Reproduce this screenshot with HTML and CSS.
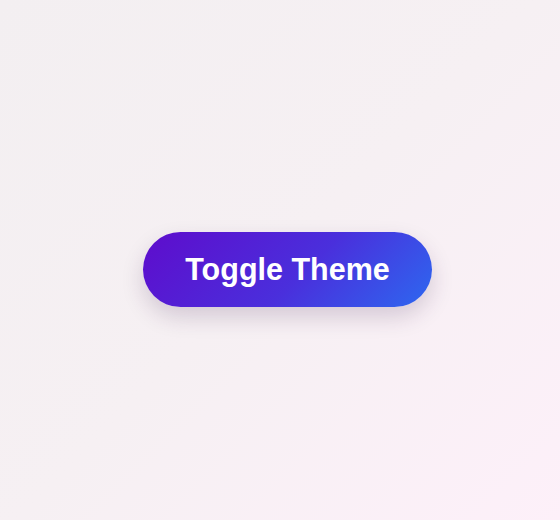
FILE: index.html
```html
<!DOCTYPE html>
<html lang="en">
<head>
<meta charset="utf-8">
<title>Toggle Theme</title>
<link rel="stylesheet" href="styles.css">
</head>
<body>
<main class="stage">
  <button class="toggle-btn" type="button">Toggle Theme</button>
</main>
</body>
</html>
```

FILE: styles.css
```css
* { box-sizing: border-box; }
html, body { margin: 0; height: 100%; }
body {
  background: linear-gradient(135deg, #f3eff1 0%, #f6f0f3 50%, #fdf0f9 100%);
  font-family: "Liberation Sans", Arial, sans-serif;
}
.stage {
  height: 520px;
  display: flex;
  align-items: center;
  justify-content: center;
  padding: 19px 0 0 15px;
}
.toggle-btn {
  height: 75px;
  padding: 0 42px;
  border: none;
  border-radius: 38px;
  background: linear-gradient(135deg, #5e0ccc 0%, #4a2fdc 55%, #2d68f0 100%);
  color: #ffffff;
  font-family: "Liberation Sans", Arial, sans-serif;
  font-weight: bold;
  font-size: 30.5px;
  line-height: 1;
  box-shadow: 0 10px 22px rgba(60, 30, 80, 0.18);
  cursor: pointer;
}
```
